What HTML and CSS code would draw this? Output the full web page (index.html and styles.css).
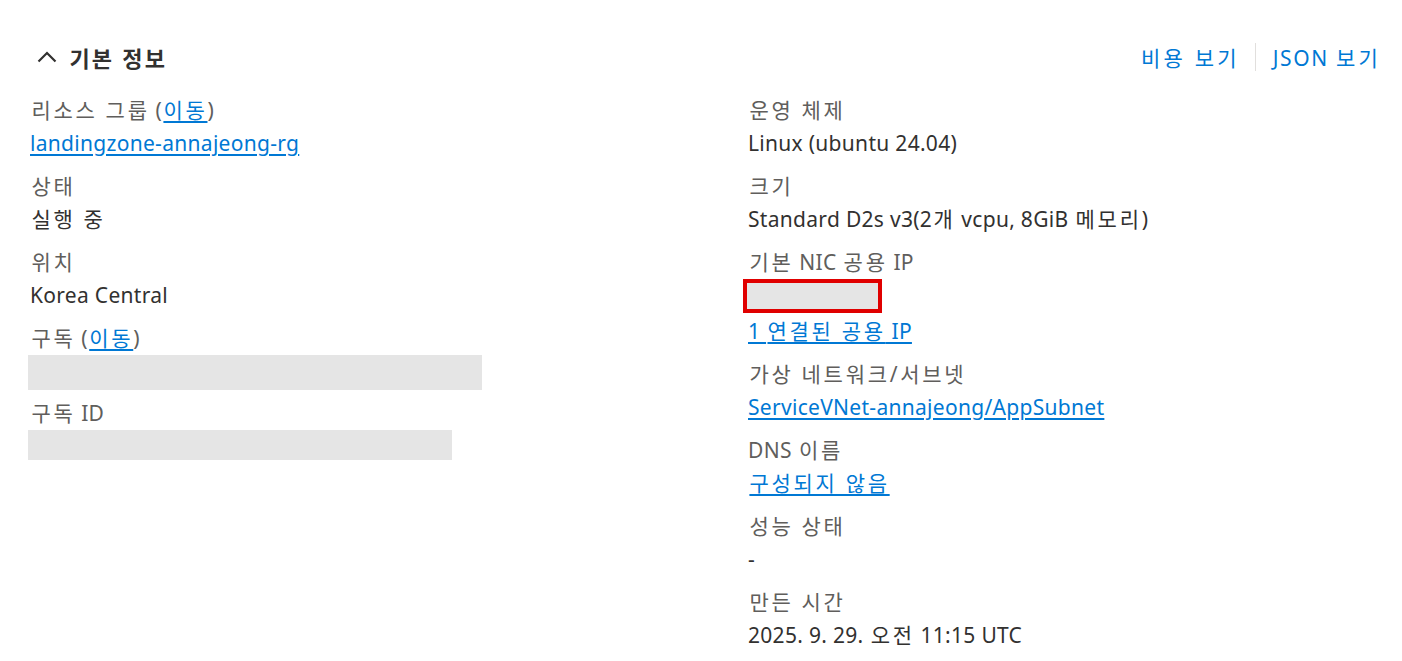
FILE: index.html
```html
<!DOCTYPE html>
<html lang="ko">
<head>
<meta charset="utf-8">
<title>기본 정보</title>
<link rel="stylesheet" href="styles.css">
</head>
<body>
<div class="page">
  <div class="header">
    <div class="title">
      <svg class="chev" width="20" height="12" viewBox="0 0 20 12"><path d="M1.5 10.5 L10 2 L18.5 10.5" fill="none" stroke="#323130" stroke-width="2.2"/></svg>
      <span class="ko">기본 정보</span>
    </div>
    <div class="actions">
      <a class="action" href="#"><span class="ko">비용 보기</span></a>
      <span class="sep"></span>
      <a class="action" href="#"><span class="lat">JSON</span> <span class="ko">보기</span></a>
    </div>
  </div>
  <div class="cols">
    <div class="col left">
      <div class="item">
        <div class="label"><span class="ko">리소스 그룹</span> (<a href="#"><span class="ko">이동</span></a>)</div>
        <div class="value"><a href="#">landingzone-annajeong-rg</a></div>
      </div>
      <div class="item">
        <div class="label"><span class="ko">상태</span></div>
        <div class="value"><span class="ko">실행 중</span></div>
      </div>
      <div class="item">
        <div class="label"><span class="ko">위치</span></div>
        <div class="value">Korea Central</div>
      </div>
      <div class="item sub">
        <div class="label"><span class="ko">구독</span> (<a href="#"><span class="ko">이동</span></a>)</div>
        <div class="redact r-sub"></div>
      </div>
      <div class="item">
        <div class="label"><span class="ko">구독</span> ID</div>
        <div class="redact r-subid"></div>
      </div>
    </div>
    <div class="col right">
      <div class="item">
        <div class="label"><span class="ko">운영 체제</span></div>
        <div class="value">Linux (ubuntu 24.04)</div>
      </div>
      <div class="item">
        <div class="label"><span class="ko">크기</span></div>
        <div class="value">Standard D2s v3(2<span class="ko">개</span> vcpu, 8GiB <span class="ko">메모리</span>)</div>
      </div>
      <div class="item">
        <div class="label"><span class="ko">기본</span> NIC <span class="ko">공용</span> IP</div>
        <div class="redact r-ip"></div>
        <div class="value"><a href="#">1 <span class="ko">연결된 공용</span> IP</a></div>
      </div>
      <div class="item">
        <div class="label"><span class="ko">가상 네트워크/서브넷</span></div>
        <div class="value"><a href="#">ServiceVNet-annajeong/AppSubnet</a></div>
      </div>
      <div class="item">
        <div class="label">DNS <span class="ko">이름</span></div>
        <div class="value"><a href="#"><span class="ko">구성되지 않음</span></a></div>
      </div>
      <div class="item">
        <div class="label"><span class="ko">성능 상태</span></div>
        <div class="value">-</div>
      </div>
      <div class="item">
        <div class="label"><span class="ko">만든 시간</span></div>
        <div class="value">2025. 9. 29. <span class="ko">오전</span> 11:15 UTC</div>
      </div>
    </div>
  </div>
</div>
</body>
</html>
```
FILE: styles.css
```css
* { box-sizing: border-box; }
html, body { margin: 0; padding: 0; background: #fff; }
body {
  font-family: "Noto Sans", "Noto Sans CJK KR", sans-serif;
  font-size: 21px;
  letter-spacing: 0.3px;
  color: #323130;
  overflow: hidden;
}
.ko { letter-spacing: 2.7px; padding-left: 1.4px; }
.lat { letter-spacing: 1.6px; }
.page { padding: 38px 21px 0 30px; }
.header {
  display: flex;
  justify-content: space-between;
  align-items: center;
  height: 38px;
}
.title {
  display: flex;
  align-items: center;
  gap: 11px;
  font-size: 22px;
  font-weight: 700;
  color: #323130;
  padding-left: 7px;
}
.title .ko { letter-spacing: 2.2px; }
.chev { display: block; }
.actions { display: flex; align-items: center; }
.actions .ko { letter-spacing: 3.2px; }
.action {
  color: #0078d4;
  text-decoration: none;
}
.sep {
  width: 1px;
  height: 28px;
  background: #e1dfdd;
  margin: 0 17px 0 15px;
}
.cols {
  display: flex;
  margin-top: 18px;
}
.col { display: flex; flex-direction: column; gap: 10px; }
.left { width: 720px; margin-left: -2px; }
.left .label, .left .value { padding-left: 2px; }
.label { color: #605e5c; line-height: 33px; height: 33px; white-space: nowrap; }
.value { color: #323130; line-height: 33px; height: 33px; white-space: nowrap; }
a { color: #0078d4; text-decoration: underline; text-underline-offset: 3px; }
.redact { background: #e5e5e5; }
.r-sub { width: 454px; height: 35px; }
.sub { margin-bottom: -3px; }
.r-subid { width: 424px; height: 30px; }
.r-ip {
  width: 139px;
  height: 34px;
  border: 4px solid #e00000;
  margin: 0 0 2px -5px;
}
```
